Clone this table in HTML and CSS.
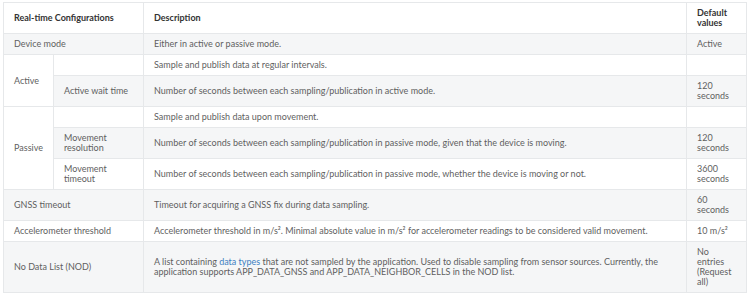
FILE: index.html
```html
<!DOCTYPE html>
<html>
<head>
<meta charset="utf-8">
<link rel="stylesheet" href="styles.css">
</head>
<body>
<table class="cfg">
  <colgroup>
    <col class="c1"><col class="c2"><col class="c3"><col class="c4">
  </colgroup>
  <thead>
    <tr>
      <th colspan="2">Real-time Configurations</th>
      <th>Description</th>
      <th>Default values</th>
    </tr>
  </thead>
  <tbody>
    <tr class="alt">
      <td colspan="2">Device mode</td>
      <td>Either in active or passive mode.</td>
      <td>Active</td>
    </tr>
    <tr>
      <td rowspan="2">Active</td>
      <td></td>
      <td>Sample and publish data at regular intervals.</td>
      <td></td>
    </tr>
    <tr class="alt">
      <td>Active wait time</td>
      <td>Number of seconds between each sampling/publication in active mode.</td>
      <td>120 seconds</td>
    </tr>
    <tr>
      <td rowspan="3">Passive</td>
      <td></td>
      <td>Sample and publish data upon movement.</td>
      <td></td>
    </tr>
    <tr class="alt">
      <td>Movement resolution</td>
      <td>Number of seconds between each sampling/publication in passive mode, given that the device is moving.</td>
      <td>120 seconds</td>
    </tr>
    <tr>
      <td>Movement timeout</td>
      <td>Number of seconds between each sampling/publication in passive mode, whether the device is moving or not.</td>
      <td>3600 seconds</td>
    </tr>
    <tr class="alt">
      <td colspan="2">GNSS timeout</td>
      <td>Timeout for acquiring a GNSS fix during data sampling.</td>
      <td>60 seconds</td>
    </tr>
    <tr>
      <td colspan="2">Accelerometer threshold</td>
      <td>Accelerometer threshold in m/s². Minimal absolute value in m/s² for accelerometer readings to be considered valid movement.</td>
      <td>10 m/s²</td>
    </tr>
    <tr class="alt">
      <td colspan="2">No Data List (NOD)</td>
      <td>A list containing <a href="#" class="link">data types</a> that are not sampled by the application. Used to disable sampling from sensor sources. Currently, the application supports APP_DATA_GNSS and APP_DATA_NEIGHBOR_CELLS in the NOD list.</td>
      <td>No entries (Request all)</td>
    </tr>
  </tbody>
</table>
</body>
</html>
```
FILE: styles.css
```css
html, body {
  margin: 0;
  padding: 0;
  background: #ffffff;
}
body {
  padding: 2px 2px 0 3px;
  font-family: Lato, "Liberation Sans", sans-serif;
  font-size: 9px;
  line-height: 10px;
  color: #5f5f5f;
}
.cfg {
  width: 744px;
  table-layout: fixed;
  border-collapse: collapse;
  border: 1px solid #e6e8ea;
}
.c1 { width: 50px; }
.c2 { width: 90px; }
.c3 { width: 543px; }
.c4 { width: 60px; }
.cfg th, .cfg td {
  border: 1px solid #e6e8ea;
  padding: 5px 10px;
  text-align: left;
  vertical-align: middle;
}
.cfg th {
  color: #333333;
  font-weight: 700;
}
.cfg tr.alt {
  background: #f5f6f7;
}
.link {
  color: #3d7fc1;
  text-decoration: none;
}
```
